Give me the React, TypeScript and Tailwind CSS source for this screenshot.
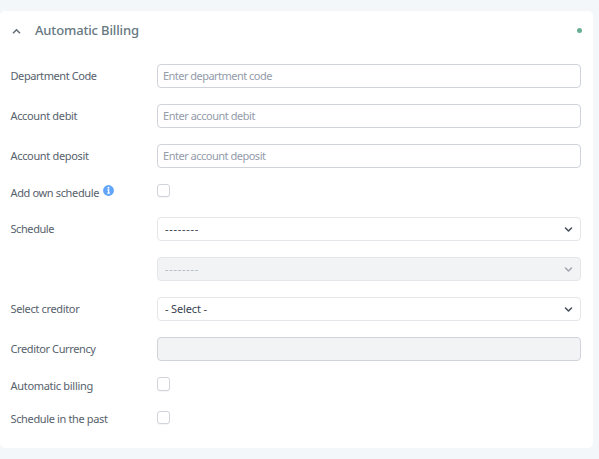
import type { ReactNode } from 'react';

const control = 'block h-6 w-[424px] rounded-[4px] border text-[11px] outline-none';

function Row({ label, height = 'h-10', offset = 'pt-3', spacing = '', children }: {
  label?: ReactNode; height?: string; offset?: string; spacing?: string; children: ReactNode;
}) {
  return (
    <div className={`flex ${height}`}>
      <div className={`-ml-[0.5px] w-[146.5px] shrink-0 whitespace-nowrap text-[11px] leading-4 text-[#57616c] ${offset} ${spacing}`}>{label}</div>
      <div className="pt-2">{children}</div>
    </div>
  );
}

function TextInput({ placeholder, spacing = '' }: { placeholder: string; spacing?: string }) {
  return (
    <input
      placeholder={placeholder}
      className={`${control} ${spacing} border-[#d0d3dc] bg-white pb-[2px] pl-[5px] placeholder:text-[#949baa]`}
    />
  );
}

function Select({ value, spacing, disabled = false }: { value: string; spacing: string; disabled?: boolean }) {
  return (
    <div className={`${control} ${disabled ? 'border-[#e4e6ea] bg-[#f2f3f5] text-[#b3b8c3]' : 'border-[#e4e6ea] bg-white text-[#374151]'}`}>
      <div className="flex h-full items-center justify-between pl-[7px] pr-[7px]">
        <span className={spacing}>{value}</span>
        <svg width="9" height="7" viewBox="0 0 9 7" fill="none" stroke={disabled ? '#a2a8b1' : '#48525e'} strokeWidth="1.6" strokeLinecap="round" strokeLinejoin="round">
          <path d="M1.5 2 4.5 5 7.5 2" />
        </svg>
      </div>
    </div>
  );
}

function Checkbox({ tall = false }: { tall?: boolean }) {
  return <div className={`w-[13px] rounded-[3px] border border-[#d0d3dc] bg-white shadow-[0_1px_1px_rgba(0,0,0,0.04)] ${tall ? 'h-[14px]' : 'h-[13px]'}`} />;
}

export default function App() {
  return (
    <div className="h-[459px] w-[599px] overflow-hidden bg-[#f3f7fa] pt-[11px] font-['Noto_Sans',sans-serif]">
      <section className="h-[437px] w-[593px] rounded-[5px] bg-white pl-[11px]">
        <header className="flex h-[45px] items-start">
          <svg className="mt-[17px]" width="11" height="7" viewBox="0 0 11 7" fill="none" stroke="#66707b" strokeWidth="1.6">
            <path d="M2 5.3 5.5 1.8 9 5.3" />
          </svg>
          <h2 className="ml-[13px] mt-[9px] text-[13px] font-medium leading-5 tracking-[-0.15px] text-[#667880]">Automatic Billing</h2>
          <span className="ml-auto mr-[11px] mt-[17px] size-[5px] rounded-full bg-[#68af94]" />
        </header>
        <Row label="Department Code" spacing="tracking-[-0.42px]"><TextInput placeholder="Enter department code" spacing="tracking-[-0.53px]" /></Row>
        <Row label="Account debit" spacing="tracking-[-0.35px]"><TextInput placeholder="Enter account debit" spacing="tracking-[-0.47px]" /></Row>
        <Row label="Account deposit" spacing="tracking-[-0.34px]"><TextInput placeholder="Enter account deposit" spacing="tracking-[-0.49px]" /></Row>
        <Row height="h-[33px]" offset="pt-[9px]" spacing="tracking-[-0.36px]" label={
          <span className="flex">
            <span>Add own schedule</span>
            <svg className="ml-[3.5px]" width="11" height="11" viewBox="0 0 11 11">
              <circle cx="5.5" cy="5.5" r="5.4" fill="#60a5fa" />
              <circle cx="5.5" cy="2.8" r="0.95" fill="white" />
              <path d="M4.3 4.8h1.4v3.2M4.2 8.1h2.7" fill="none" stroke="white" strokeWidth="1.2" />
            </svg>
          </span>
        }><Checkbox /></Row>
        <Row label="Schedule" spacing="tracking-[-0.42px]"><Select value="--------" spacing="tracking-[0.7px]" /></Row>
        <Row><Select value="--------" spacing="tracking-[0.7px]" disabled /></Row>
        <Row label="Select creditor" spacing="tracking-[-0.34px]"><Select value="- Select -" spacing="tracking-[-0.15px]" /></Row>
        <Row label="Creditor Currency" spacing="tracking-[-0.39px]"><input disabled className={`${control} border-[#d0d3dc] bg-[#f2f3f5]`} /></Row>
        <Row height="h-[33px]" offset="pt-[9px]" label="Automatic billing" spacing="tracking-[-0.3px]"><Checkbox tall /></Row>
        <Row height="h-[33px]" offset="pt-[9px]" label="Schedule in the past" spacing="tracking-[-0.36px]"><div className="pt-px"><Checkbox /></div></Row>
      </section>
    </div>
  );
}
